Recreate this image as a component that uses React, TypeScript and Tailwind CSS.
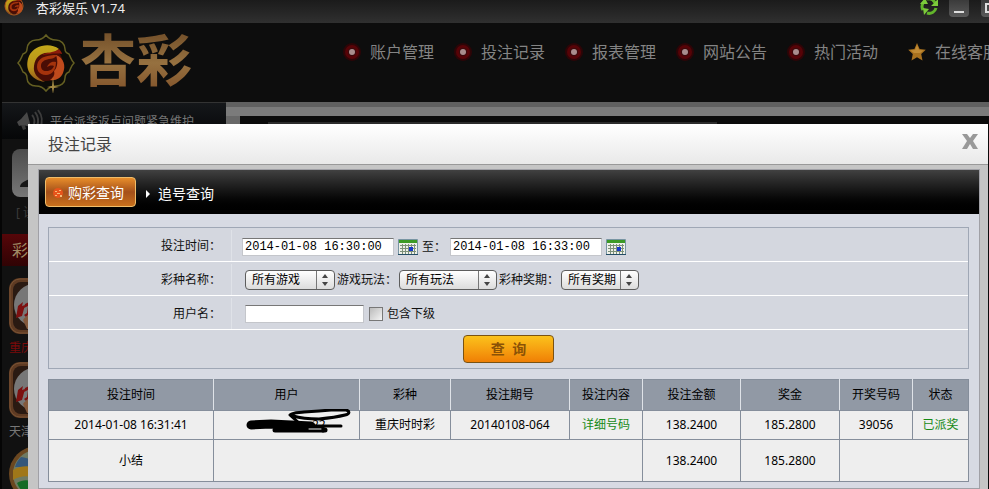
import { useState } from 'react';

const navItems = ['账户管理', '投注记录', '报表管理', '网站公告', '热门活动'];

const columns = [
  { title: '投注时间', width: 'w-[165px]' },
  { title: '用户', width: 'w-[146px]' },
  { title: '彩种', width: 'w-[91px]' },
  { title: '投注期号', width: 'w-[119px]' },
  { title: '投注内容', width: 'w-[73px]' },
  { title: '投注金额', width: 'w-[98px]' },
  { title: '奖金', width: 'w-[99px]' },
  { title: '开奖号码', width: 'w-[73px]' },
  { title: '状态', width: 'w-[56px]' },
];

const Phoenix = () => (
  <>
    <circle cx="28" cy="29" r="17" fill="#4a0d05" />
    <path
      d="M41 14C32 7 16 10 11 21c-5 12 1 24 16 26-8-4-12-9-11-16 1-9 8-14 15-13 3 0 6-1 10-4z"
      fill="url(#wing)"
    />
    <path d="M20 27c3-5 9-7 19-7-2 3-5 4-8 4-5 1-8 3-8 7 0 3 2 5 5 5 4 0 7-2 8-5-3-1-5 0-7 1 2-5 6-6 9-5 0 8-4 13-10 13-7 0-11-6-8-13z" fill="#a5330c" />
    <path d="M38 20c8 3 10 11 7 18-2 5-7 8-13 7 4-3 5-6 4-9 4-4 4-10 2-16z" fill="#bf4a1c" />
    <path d="M24 20c5-3 12-2 17-6 2 2 3 4 3 5-6-1-12 0-20 1z" fill="#8c1b0a" />
  </>
);

const WingGradient = () => (
  <defs>
    <linearGradient id="wing" x1="0" y1="0" x2="0" y2="1">
      <stop offset="0%" stopColor="#c4a81a" />
      <stop offset="60%" stopColor="#b8921a" />
      <stop offset="100%" stopColor="#96561a" />
    </linearGradient>
  </defs>
);

const SmallLogo = () => (
  <svg className="h-5 w-5" viewBox="7 8 42 42">
    <WingGradient />
    <Phoenix />
    <circle cx="28" cy="29" r="19" fill="none" stroke="#b5571a" strokeWidth="2" />
  </svg>
);

const Logo = () => (
  <svg className="h-[60px] w-[60px]" viewBox="-2 -2 60 60">
    <WingGradient />
    <path
      d="M28 0c3 4 6 5 10 5 5 0 9 4 9 9 0 3 1 4 4 5 2 4 2 6 5 9-3 3-3 5-5 9-3 1-4 3-4 6 0 5-4 8-9 8-4 0-7 1-10 5-3-4-6-5-10-5-5 0-9-3-9-8 0-3-1-5-4-6-2-4-2-6-5-9 3-3 3-5 5-9 3-1 4-2 4-5 0-5 4-9 9-9 4 0 7-1 10-5z"
      fill="#0d0c08"
      stroke="#645f22"
      strokeWidth="1.5"
    />
    <Phoenix />
    <path d="M35 42l1 9 5 1-5 1-1 6-1-6-5-1 5-1z" fill="#a58b45" />
  </svg>
);

const Bullet = () => (
  <svg className="h-[18px] w-[18px]" viewBox="0 0 18 18">
    <circle cx="9" cy="9" r="9" fill="#2d0507" />
    <circle cx="9" cy="9" r="7" fill="#560307" />
    <circle cx="9" cy="9" r="4" fill="#3a0a0c" />
    <circle cx="9" cy="9" r="3" fill="#a98d8d" />
  </svg>
);

const Star = () => (
  <svg className="h-[18px] w-[18px]" viewBox="0 0 18 18">
    <path d="M9 0l2.6 6 6.2.7-4.6 4.3 1.3 6.4L9 14.300l-5.500 3.100 1.300-6.400L.2 6.700 6.400 6z" fill="#a8711f" />
    <path d="M9 2l2 5 4.500.6-3.500 2.400H6L2.500 7.600 7 7z" fill="#c08b36" />
  </svg>
);

const Refresh = () => (
  <svg className="h-5 w-5" viewBox="0 0 20 20" fill="none" stroke="#62b52b" strokeWidth="3">
    <path d="M4 14A7 7 0 0 1 4 7M8 3a7 7 0 0 1 8 4M17 12a7 7 0 0 1-9 5" />
    <path d="M1 8l5-6 3 6zM19 3v7h-7zM4 12l6 1-5 6z" fill="#7ccb3b" stroke="none" />
  </svg>
);

const Speaker = () => (
  <svg className="h-6 w-7" viewBox="0 0 28 24" fill="none" stroke="#3c3c3c" strokeWidth="2">
    <path d="M1 13l4-3 6-7 4 15-8-2-4 1z" fill="#484848" stroke="none" />
    <path d="M5 16l2 5 3-1-1-4z" fill="#3c3c3c" stroke="none" />
    <path d="M16 6c2 2 3 6 2 9M19 3c3 4 4 9 2 14M22 1c4 5 5 12 2 18" />
  </svg>
);

const LotteryIcon = () => (
  <svg className="h-14 w-14" viewBox="0 0 56 56">
    <rect width="56" height="56" rx="11" fill="#5f3b23" />
    <rect x="1" y="1" width="54" height="54" rx="10" fill="none" stroke="#7a5334" />
    <rect x="4" y="4" width="48" height="48" rx="8" fill="#2a1a12" />
    <ellipse cx="28" cy="27" rx="23" ry="22" fill="#777" />
    <path d="M9 28l5-4-1 4 3-1-3 11-6 2zM16 26l6-3-1 12-4 4-2-2 3-2 1-7-4 2z" fill="#7d1010" />
    <path d="M14 42c5-8 18-8 24 0l-4 9H18z" fill="#83583b" />
  </svg>
);

const Globe = () => (
  <svg className="h-14 w-14" viewBox="0 0 56 56">
    <circle cx="28" cy="28" r="28" fill="#6b4720" />
    <circle cx="28" cy="28" r="24" fill="#6f7a62" />
    <path d="M12 11c8 1 16 5 20 10H6c1-4 3-7 6-10z" fill="#34577a" />
    <path d="M4 24c12-7 24-3 34 3v12C26 29 14 28 4 34z" fill="#a07719" />
    <path d="M8 37c8-5 18-3 26 6v9C22 54 12 47 8 37z" fill="#146b25" />
  </svg>
);

const Calendar = () => (
  <svg className="h-4 w-5" viewBox="0 0 20 16">
    <rect width="20" height="16" rx="1" fill="#7895a3" />
    <rect x="1" y="4" width="18" height="11" fill="#eef0e9" />
    <rect x="1" y="1" width="18" height="3" fill="#3c9a25" />
    <path d="M2 6.500h16M2 9.500h16M2 12.500h16M4.500 5v10M7.500 5v10M10.500 5v10M13.500 5v10M16.500 5v10" stroke="#7d9078" />
    <rect x="11" y="8" width="4" height="4" fill="#1637c8" />
    <path d="M0 15h20v1H0z" fill="#244d66" />
  </svg>
);

const Scribble = () => (
  <svg className="absolute -top-2 left-[31px] h-8 w-[110px]" viewBox="0 0 110 32" fill="none" stroke="#000" strokeLinecap="round" strokeLinejoin="round">
    <path d="M6 16l20-1 40 2" strokeWidth="9" />
    <path d="M30 21h50" strokeWidth="5" />
    <path d="M66 17h30" strokeWidth="3" />
    <path d="M64 18h14v4" strokeWidth="3" />
    <path d="M64 20h12" stroke="#eee" strokeWidth="1" />
    <path d="M54 14l-9-8c4-3 9-2 14-3l15-1 12-1h15c4 1 4 4-1 5-8 2-16 3-26 4-9 0-16 0-26-3" strokeWidth="3" />
  </svg>
);

interface DropDownProps {
  id: string;
  text: string;
  width: string;
}

const DropDown = ({ id, text, width }: DropDownProps) => (
  <span className={`relative inline-flex ${width}`}>
    <select
      id={id}
      className="h-5 w-full appearance-none rounded border border-[#5d5d5d] bg-linear-to-b from-white to-[#dcdcdc] pl-1.5 text-xs leading-4 text-black"
    >
      <option>{text}</option>
    </select>
    <svg className="pointer-events-none absolute top-px right-px h-[18px] w-[18px]" viewBox="0 0 18 18">
      <path d="M.5 0v18" stroke="#777" />
      <path d="M6 7l3-4 3 4zM6 11l3 4 3-4z" fill="#444" />
    </svg>
  </span>
);

const Sidebar = () => (
  <aside className="w-[226px] shrink-0 border-l-2 border-[#050505] bg-[#111]">
    <div className="flex h-[37px] items-center border-t border-[#333] bg-linear-to-b from-[#15171a] to-[#060708] pl-3.5 text-xs text-[#777]">
      <Speaker />
      <span className="ml-[6px] pt-0.5">平台派奖返点问题紧急维护</span>
    </div>
    <div className="mt-[10px] ml-[10px] h-12 w-12 rounded-lg bg-linear-to-b from-[#4c4c4c] to-[#777]">
      <svg className="h-12 w-12" viewBox="0 0 48 48">
        <path d="M8 38c0-6 9-6 11-10-3-6-2-14 5-14s8 8 5 14c2 4 11 4 11 10z" fill="#161616" />
      </svg>
    </div>
    <div className="mt-2 h-6 pl-3.5 text-xs leading-4 text-[#3b3b3b]">[ 设置 ]</div>
    <h3 className="mt-[5px] flex h-8 items-center bg-linear-to-b from-[#560609] to-[#300304] pl-2.5 text-base text-[#a08b64]">
      彩票
    </h3>
    <div className="mt-3 flex flex-col pl-[7px] text-xs leading-4 text-[#777]">
      <LotteryIcon />
      <span className="mt-1.5 mb-[6px] text-[#7a0a0a]">重庆时时彩</span>
      <LotteryIcon />
      <span className="mt-1.5 mb-1.5">天津时时彩</span>
      <Globe />
    </div>
  </aside>
);

const rowClass = 'grid grid-cols-[183px_1fr] border-b border-white h-[34px] pt-0.5';
const labelClass = 'flex items-center justify-end border-r border-[#dfe2e8] pr-2.5';
const inputClass =
  'h-[18px] border border-[#c4c6cb] border-t-[#777] bg-white px-0.5 text-xs text-black outline-none';
const cellClass = 'border border-[#858e9b] p-0 text-center font-normal';

const SearchForm = () => {
  const [start, setStart] = useState('2014-01-08 16:30:00');
  const [end, setEnd] = useState('2014-01-08 16:33:00');

  return (
    <form
      className="border border-[#9fa7b5] bg-[#d4d7df] text-xs text-[#111]"
      onSubmit={(e) => e.preventDefault()}
    >
      <div className={rowClass}>
        <label htmlFor="start" className={labelClass}>投注时间：</label>
        <div className="flex items-center pt-0.5 pl-[10px]">
          <input
            id="start"
            value={start}
            onChange={(e) => setStart(e.target.value)}
            className={`${inputClass} w-[152px] font-['Liberation_Mono',monospace]`}
          />
          <button type="button" aria-label="选择开始时间" className="mx-1">
            <Calendar />
          </button>
          <label htmlFor="end" className="mr-1">至：</label>
          <input
            id="end"
            value={end}
            onChange={(e) => setEnd(e.target.value)}
            className={`${inputClass} w-[152px] font-['Liberation_Mono',monospace]`}
          />
          <button type="button" aria-label="选择结束时间" className="ml-1">
            <Calendar />
          </button>
        </div>
      </div>
      <div className={rowClass}>
        <label htmlFor="game" className={labelClass}>彩种名称：</label>
        <div className="flex items-center pl-[13px]">
          <DropDown id="game" text="所有游戏" width="w-[90px]" />
          <label htmlFor="method" className="mx-0.5">游戏玩法：</label>
          <DropDown id="method" text="所有玩法" width="w-[98px]" />
          <label htmlFor="issue" className="mx-0.5">彩种奖期：</label>
          <DropDown id="issue" text="所有奖期" width="w-[78px]" />
        </div>
      </div>
      <div className={rowClass}>
        <label htmlFor="user" className={labelClass}>用户名：</label>
        <div className="flex items-center pl-[13px]">
          <input id="user" className={`${inputClass} w-[119px]`} />
          <input
            id="sub"
            type="checkbox"
            className="ml-[5px] h-3.5 w-3.5 appearance-none border border-[#777] bg-linear-to-br from-[#bbb] to-[#f4f4f4]"
          />
          <label htmlFor="sub" className="ml-1">包含下级</label>
        </div>
      </div>
      <div className="flex h-[38px] items-center justify-center">
        <button
          type="submit"
          className="h-7 w-[91px] rounded border border-[#7a5212] bg-linear-to-b from-[#fbc21b] to-[#ef7f05] text-sm font-bold text-[#8a5206]"
        >
          查&nbsp; 询
        </button>
      </div>
    </form>
  );
};

const RecordTable = () => (
  <table className="mt-2.5 w-full table-fixed border-collapse bg-[#eee] text-xs text-black">
    <thead>
      <tr className="h-[31px] bg-[#9199a5]">
        {columns.map((c) => (
          <th
            key={c.title}
            className={`${c.width} border border-x-[#dfe3e8] border-y-[#858e9b] p-0 text-center font-normal first:border-l-[#858e9b] last:border-r-[#858e9b]`}
          >
            {c.title}
          </th>
        ))}
      </tr>
    </thead>
    <tbody>
      <tr className="h-[29px]">
        <td className={cellClass}>2014-01-08 16:31:41</td>
        <td className={cellClass}>
          <div className="relative pl-[98px] text-left">
            22
            <Scribble />
          </div>
        </td>
        <td className={cellClass}>重庆时时彩</td>
        <td className={cellClass}>20140108-064</td>
        <td className={cellClass}>
          <a href="#detail" className="text-[#168a16]">详细号码</a>
        </td>
        <td className={cellClass}>138.2400</td>
        <td className={cellClass}>185.2800</td>
        <td className={cellClass}>39056</td>
        <td className={`${cellClass} text-[#168a16]`}>已派奖</td>
      </tr>
      <tr className="h-[42px]">
        <td className={cellClass}>小结</td>
        <td className={cellClass} colSpan={4}></td>
        <td className={cellClass}>138.2400</td>
        <td className={cellClass}>185.2800</td>
        <td className={cellClass} colSpan={2}></td>
      </tr>
    </tbody>
  </table>
);

const RecordDialog = () => (
  <section
    role="dialog"
    aria-label="投注记录"
    className="absolute top-[124px] right-px bottom-0 left-7 flex flex-col overflow-hidden bg-[#c5c5c5]"
  >
    <header className="flex h-[41px] shrink-0 items-center justify-between border-b border-[#999] bg-linear-to-b from-white to-[#e9e9e9] pr-2.5 pl-5">
      <h2 className="text-base text-[#444]">投注记录</h2>
      <button type="button" aria-label="关闭" className="mb-1">
        <svg className="h-4 w-4" viewBox="0 0 16 16">
          <path d="M0 0h5l3 4 3-4h5l-5 7 5 8h-5l-3-5-3 5H0l5-8z" fill="#999" />
        </svg>
      </button>
    </header>
    <div className="mt-1 mr-2 ml-2.5 grow border border-[#a0a0a6] bg-[#d7dae3]">
      <nav className="flex h-11 items-center bg-linear-to-b from-[#414141] to-black pl-1.5 text-sm text-white">
        <a
          href="#buy"
          className="flex h-[30px] w-[91px] items-center rounded border border-[#f0bd6a] bg-linear-to-b from-[#e88e2b] via-[#a4501a] to-[#c8701c] pt-0.5 pl-1.5"
        >
          <svg className="mr-1 h-3 w-3" viewBox="0 0 12 12">
            <circle cx="6" cy="6" r="5" fill="#e8541b" />
            <path d="M3 4h2v1H3zM7 3h2v1H7zM5 6h3v1H5zM3 8h2v1H3zM8 8h2v2H8z" fill="#f6bb76" />
          </svg>
          购彩查询
        </a>
        <a href="#chase" className="ml-2.5 flex items-center pt-1">
          <svg className="mr-2 h-2 w-1" viewBox="0 0 4 8">
            <path d="M0 0l4 4-4 4z" fill="#fff" />
          </svg>
          追号查询
        </a>
      </nav>
      <div className="pt-[13px] pr-2.5 pl-[9px]">
        <SearchForm />
        <RecordTable />
      </div>
    </div>
  </section>
);

export default function App() {
  return (
    <div className="relative h-screen overflow-hidden bg-[#0b0b0b] font-['Noto_Sans','Noto_Sans_CJK_SC',sans-serif]">
      <div className="flex h-[23px] items-start justify-between bg-linear-to-b from-[#1b1b1b] to-[#303030]">
        <div className="flex items-center pl-1">
          <div className="-mt-1">
            <SmallLogo />
          </div>
          <h1 className="ml-3 text-[13px] leading-4 text-[#eee]">杏彩娱乐 V1.74</h1>
        </div>
        <div className="-mr-3 flex items-start">
          <button type="button" aria-label="刷新" className="-mt-1 mr-2.5">
            <Refresh />
          </button>
          <button
            type="button"
            aria-label="最小化"
            className="mr-3 flex h-[17px] w-5 items-end justify-center rounded-b bg-linear-to-b from-[#3b3b3b] to-[#5a5a5a] pb-1"
          >
            <span className="h-0.5 w-2.5 bg-[#ddd]"></span>
          </button>
          <button
            type="button"
            aria-label="最大化"
            className="flex h-[17px] w-5 items-end rounded-b bg-linear-to-b from-[#3b3b3b] to-[#5a5a5a] pb-1 pl-1"
          >
            <span className="h-2.5 w-2.5 border-2 border-[#ddd]"></span>
          </button>
        </div>
      </div>
      <header className="flex h-[79px] overflow-hidden border-l-2 border-[#050505] bg-[#0d0d0d]">
        <div className="flex h-full w-[341px] shrink-0 items-center pl-3.5">
          <Logo />
          <span className="ml-[4px] bg-linear-to-b from-[#6d4a26] via-[#967140] to-[#7d4c25] bg-clip-text pb-2 text-[56px] leading-[64px] font-bold text-transparent">
            杏彩
          </span>
        </div>
        <nav className="flex shrink-0 items-start gap-5 pt-[17px] text-base text-[#848484]">
          {navItems.map((name) => (
            <a key={name} href="#nav" className="flex items-center gap-[9px]">
              <Bullet />
              {name}
            </a>
          ))}
          <a href="#service" className="ml-2.5 flex items-center gap-[9px]">
            <Star />
            在线客服
          </a>
        </nav>
      </header>
      <div className="flex">
        <Sidebar />
        <main className="grow">
          <div className="h-[5px] bg-[#606060]"></div>
          <div className="h-[9px] bg-[#7b7b7b]"></div>
          <div className="h-[373px] border-l-[14px] border-[#686868] bg-[#0b0b0b] pt-1.5">
            <div className="ml-7 h-0.5 w-3/5 bg-[#2c2c2c]"></div>
          </div>
        </main>
      </div>
      <RecordDialog />
    </div>
  );
}
